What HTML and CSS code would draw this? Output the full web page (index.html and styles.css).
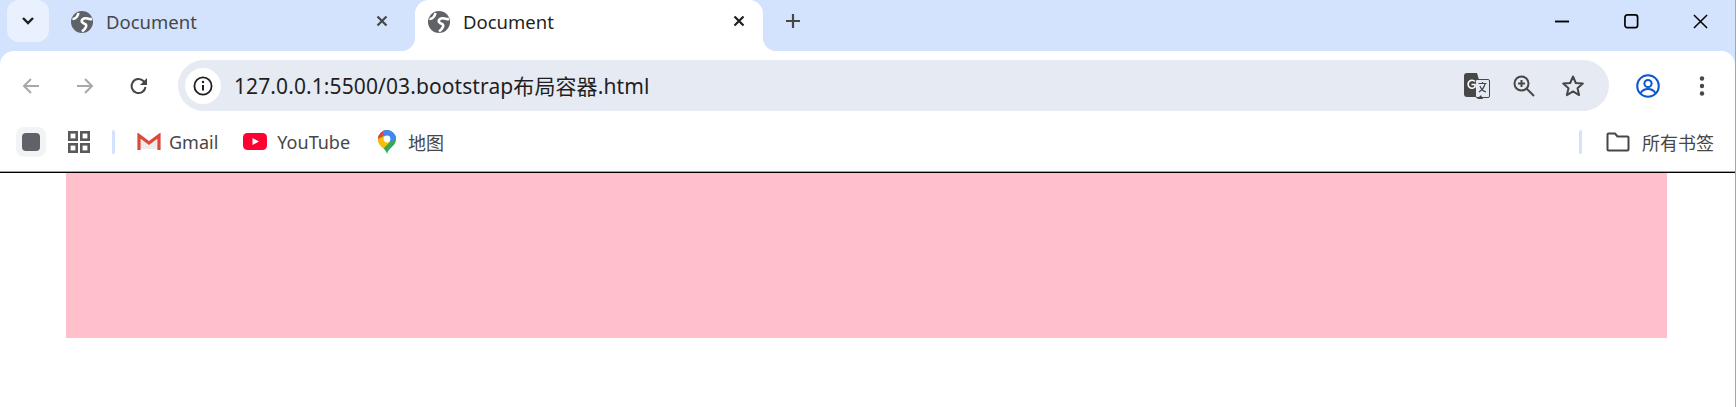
FILE: index.html
```html
<!DOCTYPE html>
<html lang="en">
<head>
    <meta charset="UTF-8">
    <title>Document</title>
    <link rel="stylesheet" href="styles.css">
</head>
<body>
    <div class="window">
        <div class="tabstrip">
            <button class="tab-search">
                <svg width="14" height="10" viewBox="0 0 14 10"><path d="M2 2l5 5 5-5" fill="none" stroke="#1f1f1f" stroke-width="2.4"/></svg>
            </button>
            <div class="tab">
                <svg class="favicon" viewBox="0 0 22 22"><circle cx="11" cy="11" r="11" fill="#5f6368"/><path d="M21 8C17 9 15 5.500 12 8c-2.500 2 -1 4 2 5 2.500 1 1 4.500-3 7.500M1.500 8C4 8 6.500 6 7.500 2" fill="none" stroke="#fff" stroke-width="2.600"/></svg>
                <span class="tab-title">Document</span>
                <svg class="tab-close" viewBox="0 0 12 12"><path d="M1.500 1.500l9 9m0-9l-9 9" stroke="#474747" stroke-width="2.200"/></svg>
            </div>
            <div class="tab active">
                <svg class="favicon" viewBox="0 0 22 22"><circle cx="11" cy="11" r="11" fill="#5f6368"/><path d="M21 8C17 9 15 5.500 12 8c-2.500 2 -1 4 2 5 2.500 1 1 4.500-3 7.500M1.500 8C4 8 6.500 6 7.500 2" fill="none" stroke="#fff" stroke-width="2.600"/></svg>
                <span class="tab-title">Document</span>
                <svg class="tab-close" viewBox="0 0 12 12"><path d="M1.500 1.500l9 9m0-9l-9 9" stroke="#1f1f1f" stroke-width="2.200"/></svg>
            </div>
            <svg class="new-tab" viewBox="0 0 16 16"><path d="M8 1v14M1 8h14" stroke="#474747" stroke-width="2.200"/></svg>
            <div class="window-controls">
                <svg viewBox="0 0 16 16"><path d="M0 8h15" stroke="#000" stroke-width="2"/></svg>
                <svg viewBox="0 0 16 16"><rect x="1" y="1" width="13.500" height="13.500" rx="2.500" fill="none" stroke="#000" stroke-width="1.800"/></svg>
                <svg viewBox="0 0 16 16"><path d="M1 1l14 14m0-14L1 15" stroke="#000" stroke-width="1.600"/></svg>
            </div>
        </div>

        <div class="toolbar">
            <div class="nav-buttons">
                <svg viewBox="0 0 20 20"><path d="M18 10H3m7-7l-7 7 7 7" fill="none" stroke="#a8a9aa" stroke-width="2"/></svg>
                <svg viewBox="0 0 20 20"><path d="M2 10h15m-7-7l7 7-7 7" fill="none" stroke="#a8a9aa" stroke-width="2"/></svg>
                <svg viewBox="0 0 20 20"><path d="M16.500 11a7 7 0 1 1-1.800-5.700L17 7.500" fill="none" stroke="#474747" stroke-width="2"/><path d="M18 2v7h-7z" fill="#474747"/></svg>
            </div>
            <div class="omnibox">
                <span class="site-info">
                    <svg viewBox="0 0 20 20"><circle cx="10" cy="10" r="8.600" fill="none" stroke="#1f1f1f" stroke-width="1.800"/><path d="M10 9v5.500" stroke="#1f1f1f" stroke-width="2"/><circle cx="10" cy="6" r="1.200" fill="#1f1f1f"/></svg>
                </span>
                <span class="url">127.0.0.1:5500/03.bootstrap布局容器.html</span>
                <div class="omnibox-actions">
                    <svg class="icon-translate" viewBox="0 0 26 26"><path d="M3 0h10l7 24H3a3 3 0 0 1-3-3V3a3 3 0 0 1 3-3z" fill="#474747"/><rect x="11.500" y="6.500" width="14" height="18" rx="1.500" fill="#e6eaf3" stroke="#474747"/><path d="M13 26h6l-2-4z" fill="#474747"/><path d="M14.500 10.500h8M18.500 9v2M21 11c-1 4-3 6-6 8M16 13c1 3 3 5 6 6" fill="none" stroke="#474747" stroke-width="1.200"/><path d="M11 8.500A4 4 0 1 0 11 14V11.500H7.500" fill="none" stroke="#fff" stroke-width="1.600"/></svg>
                    <svg class="icon-zoom" viewBox="0 0 22 22"><circle cx="8.500" cy="8.500" r="7" fill="none" stroke="#474747" stroke-width="2"/><path d="M13.500 13.500l7.500 7.500" stroke="#474747" stroke-width="2"/><path d="M8.500 5v7M5 8.500h7" stroke="#474747" stroke-width="2"/></svg>
                    <svg class="icon-star" viewBox="0 0 24 24"><path d="M12 2.500l2.800 6.500 7 .6-5.300 4.600 1.600 6.900-6.100-3.700-6.100 3.700 1.600-6.900-5.300-4.600 7-.6z" fill="none" stroke="#474747" stroke-width="2" stroke-linejoin="round"/></svg>
                </div>
            </div>
            <svg class="avatar" viewBox="0 0 24 24"><circle cx="12" cy="12" r="10.800" fill="none" stroke="#0b57d0" stroke-width="2"/><circle cx="12" cy="9.500" r="3.600" fill="none" stroke="#0b57d0" stroke-width="2"/><path d="M4.500 19c2-3 4.500-4 7.500-4s5.500 1 7.500 4" fill="none" stroke="#0b57d0" stroke-width="2"/></svg>
            <svg class="menu-dots" viewBox="0 0 6 20"><circle cx="3" cy="2.500" r="2.200" fill="#474747"/><circle cx="3" cy="10" r="2.200" fill="#474747"/><circle cx="3" cy="17.500" r="2.200" fill="#474747"/></svg>
        </div>

        <div class="bookmarks">
            <span class="ext-chip"><span class="ext-square"></span></span>
            <svg class="apps-icon" viewBox="0 0 22 22"><g fill="none" stroke="#5a5a5a" stroke-width="2.600"><rect x="1.300" y="1.300" width="7.400" height="7.400"/><rect x="13.300" y="1.300" width="7.400" height="7.400"/><rect x="1.300" y="13.300" width="7.400" height="7.400"/><rect x="13.300" y="13.300" width="7.400" height="7.400"/></g></svg>
            <span class="bar-divider"></span>
            <a class="bookmark gmail">
                <svg viewBox="0 0 24 17"><path d="M2 16V3l10 7.500L22 3v13z" fill="#eeecea"/><path d="M2 17V2.500l10 7.500 10-7.500V17" fill="none" stroke="#dc4a3d" stroke-width="3.200"/></svg>
                <span>Gmail</span>
            </a>
            <a class="bookmark youtube">
                <svg viewBox="0 0 24 17"><rect width="24" height="17" rx="4.500" fill="#ff0033"/><path d="M9.500 5l6.500 3.500-6.500 3.500z" fill="#fff"/></svg>
                <span>YouTube</span>
            </a>
            <a class="bookmark maps">
                <svg viewBox="0 0 18 24">
                    <clipPath id="pin"><path d="M9 0a9 9 0 0 0-9 9c0 2 .6 3.600 1.700 5.200C4 17.500 8 19.500 9 24c1-4.500 5-6.500 7.300-9.800C17.400 12.600 18 11 18 9a9 9 0 0 0-9-9z"/></clipPath>
                    <g clip-path="url(#pin)">
                        <rect width="18" height="24" fill="#34a853"/>
                        <path d="M0 0h9L0 12z" fill="#ea4335"/>
                        <path d="M4 0h14v9L12 12 6 6z" fill="#4285f4"/>
                        <path d="M0 9l6-3 6 6-9 9-3-6z" fill="#fbbc04"/>
                    </g>
                    <circle cx="9" cy="9" r="3.400" fill="#fff"/>
                </svg>
                <span>地图</span>
            </a>
            <span class="bar-divider right"></span>
            <a class="bookmark folder">
                <svg viewBox="0 0 24 20"><path d="M2.500 1.500h6.500l2.500 3h10a1 1 0 0 1 1 1v12a1 1 0 0 1-1 1h-19a1 1 0 0 1-1-1v-15a1 1 0 0 1 1-1z" fill="none" stroke="#474747" stroke-width="2" stroke-linejoin="round"/></svg>
                <span>所有书签</span>
            </a>
        </div>

        <div class="page">
            <div class="container"></div>
        </div>
    </div>
</body>
</html>
```

FILE: styles.css
```css
body {
    margin: 0;
    background: #fff;
    font-family: "Noto Sans", "Noto Sans CJK SC", sans-serif;
    color: #474747;
}
svg {
    display: block;
    flex: none;
}
.window {
    height: 407px;
    border-right: 1px solid #a6a6a6;
    background: #d3e3fd;
    display: flex;
    flex-direction: column;
    overflow: hidden;
}

/* tab strip */
.tabstrip {
    height: 51px;
    display: flex;
    align-items: flex-start;
    padding-left: 7px;
}
.tab-search {
    width: 42px;
    height: 42px;
    border: none;
    padding: 0;
    border-radius: 12px;
    background: #e9f0fe;
    display: flex;
    align-items: center;
    justify-content: center;
}
.tab {
    width: 348px;
    height: 51px;
    box-sizing: border-box;
    padding: 0 13px 7px 13px;
    margin-left: 9px;
    display: flex;
    align-items: center;
    font-size: 18.5px;
}
.favicon {
    width: 22px;
    height: 22px;
}
.tab-title {
    margin-left: 13px;
    padding-bottom: 2px;
    flex: 1;
}
.tab-close {
    width: 12px;
    height: 12px;
    margin-right: 5px;
    margin-top: -2px;
}
.tab.active {
    position: relative;
    background: #fff;
    color: #1f1f1f;
    border-radius: 14px 14px 0 0;
}
.tab.active::before,
.tab.active::after {
    content: "";
    position: absolute;
    bottom: 0;
    width: 14px;
    height: 14px;
}
.tab.active::before {
    left: -14px;
    background: radial-gradient(circle at 0 0, transparent 14px, #fff 14.5px);
}
.tab.active::after {
    right: -14px;
    background: radial-gradient(circle at 100% 0, transparent 14px, #fff 14.5px);
}
.new-tab {
    width: 16px;
    height: 16px;
    margin: 13px 0 0 22px;
}
.window-controls {
    margin-left: auto;
    display: flex;
    gap: 54px;
    padding: 14px 27px 0 0;
}
.window-controls svg {
    width: 15px;
    height: 15px;
}

/* toolbar */
.toolbar {
    height: 65px;
    box-sizing: border-box;
    padding: 9px 0 5px 21px;
    background: #fff;
    border-radius: 14px 14px 0 0;
    display: flex;
    align-items: center;
}
.nav-buttons {
    display: flex;
    align-items: center;
    gap: 34px;
}
.nav-buttons svg {
    width: 20px;
    height: 20px;
}
.omnibox {
    width: 1431px;
    height: 51px;
    margin-left: 29px;
    box-sizing: border-box;
    padding: 0 24px 0 7px;
    border-radius: 26px;
    background: #e6eaf3;
    display: flex;
    align-items: center;
}
.site-info {
    width: 36px;
    height: 36px;
    border-radius: 50%;
    background: #fff;
    display: flex;
    align-items: center;
    justify-content: center;
}
.site-info svg {
    width: 20px;
    height: 20px;
}
.url {
    margin-left: 13px;
    padding-bottom: 2px;
    font-size: 21px;
    letter-spacing: 0.1px;
    color: #1f1f1f;
}
.omnibox-actions {
    margin-left: auto;
    display: flex;
    align-items: center;
    gap: 25px;
}
.icon-translate {
    width: 26px;
    height: 26px;
}
.icon-zoom {
    width: 22px;
    height: 22px;
    margin: 0 1px 0 -2px;
}
.icon-star {
    width: 24px;
    height: 24px;
}
.avatar {
    width: 24px;
    height: 24px;
    margin-left: 27px;
}
.menu-dots {
    width: 6px;
    height: 20px;
    margin-left: 39px;
}

/* bookmarks bar */
.bookmarks {
    height: 56px;
    box-sizing: border-box;
    padding: 0 21px 4px 16px;
    background: #fff;
    border-bottom: 1px solid #a0a0a0;
    display: flex;
    align-items: center;
    font-size: 18px;
}
.ext-chip {
    width: 30px;
    height: 30px;
    border-radius: 8px;
    background: #f1f3f5;
    display: flex;
    align-items: center;
    justify-content: center;
}
.ext-square {
    width: 18px;
    height: 18px;
    border-radius: 4px;
    background: #5f6368;
}
.apps-icon {
    width: 22px;
    height: 22px;
    margin-left: 22px;
}
.bar-divider {
    width: 3px;
    height: 24px;
    border-radius: 2px;
    background: #d3e3fd;
    margin-left: 22px;
}
.bar-divider.right {
    margin-left: auto;
}
.bookmark {
    display: flex;
    align-items: center;
}
.gmail {
    margin-left: 22px;
}
.gmail svg {
    width: 24px;
    height: 17px;
    margin-right: 8px;
}
.youtube {
    margin-left: 25px;
}
.youtube svg {
    width: 24px;
    height: 17px;
    margin-right: 10px;
}
.maps {
    margin-left: 28px;
}
.maps svg {
    width: 18px;
    height: 24px;
    margin-right: 12px;
}
.folder {
    margin-left: 24px;
}
.folder svg {
    width: 24px;
    height: 20px;
    margin-right: 12px;
}

/* page under the browser chrome */
.page {
    flex: 1;
    background: #fff;
    border-top: 1px solid #000;
    padding: 0 68px 0 66px;
}
.container {
    height: 165px;
    background: pink;
}
```
